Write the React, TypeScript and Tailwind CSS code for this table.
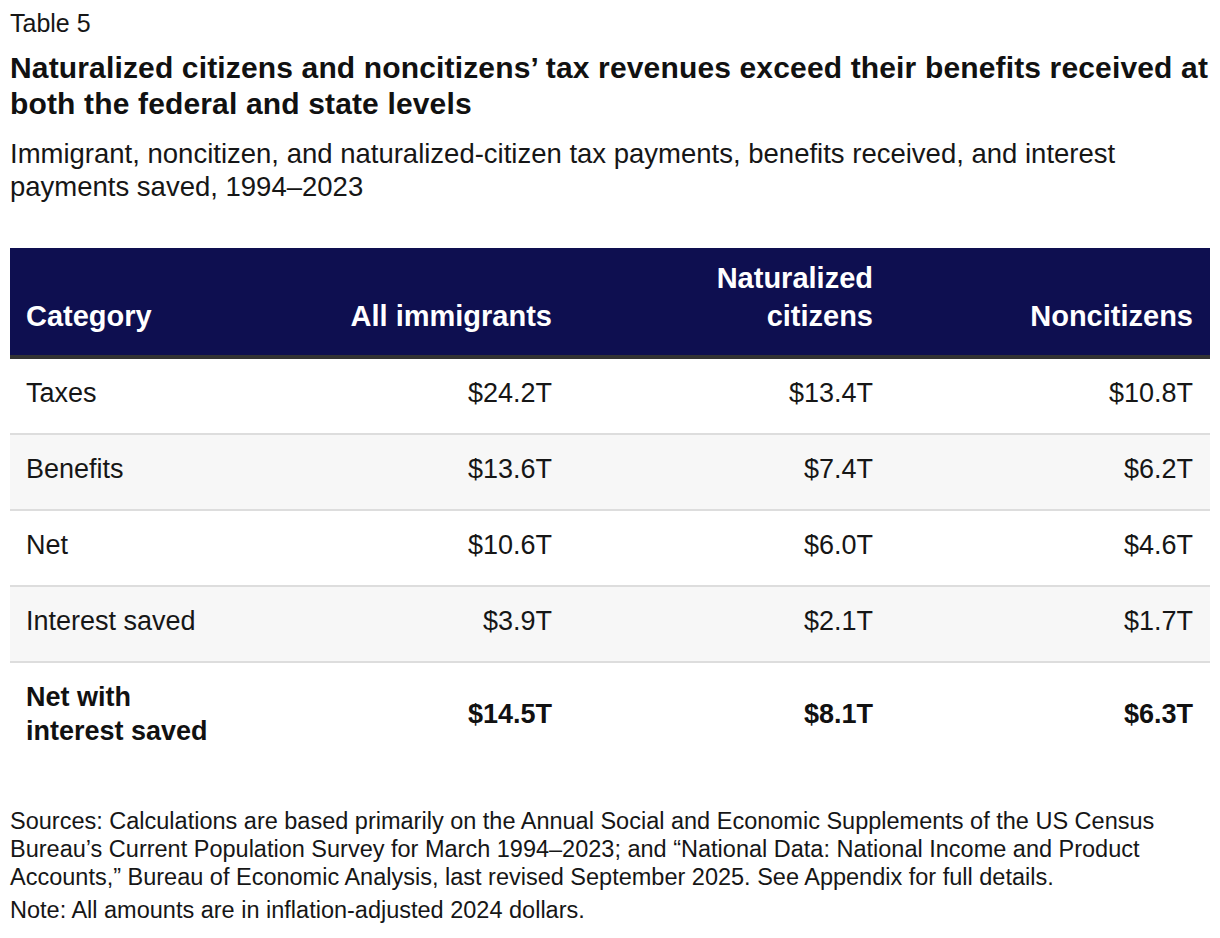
import React from "react";

const rows = [
  { label: "Taxes", a: "$24.2T", b: "$13.4T", c: "$10.8T" },
  { label: "Benefits", a: "$13.6T", b: "$7.4T", c: "$6.2T" },
  { label: "Net", a: "$10.6T", b: "$6.0T", c: "$4.6T" },
  { label: "Interest saved", a: "$3.9T", b: "$2.1T", c: "$1.7T" },
];

export default function App() {
  return (
    <div className="w-[1220px] h-[938px] bg-white px-[10px] text-[#161616] font-['Liberation_Sans',Arial,sans-serif]">
      <p className="pt-[9px] text-[25px] leading-[28px]">Table 5</p>
      <h1 className="mt-[13px] text-[30px] leading-[36px] font-bold tracking-[0.15px] whitespace-nowrap text-[#111]">
        Naturalized citizens and noncitizens’ tax revenues exceed their benefits received at
        <br />
        both the federal and state levels
      </h1>
      <p className="mt-[15px] text-[27.5px] leading-[33px] whitespace-nowrap">
        Immigrant, noncitizen, and naturalized-citizen tax payments, benefits received, and interest
        <br />
        payments saved, 1994–2023
      </p>

      <div className="mt-[45px] w-[1200px]">
        <div className="grid grid-cols-[239px_320px_321px_320px] items-end bg-[#0e0f50] border-b-4 border-[#333333] pt-[11px] pb-[20px] text-white font-bold text-[29px] leading-[38px]">
          <div className="pl-[16px]">Category</div>
          <div className="pr-[17px] text-right">All immigrants</div>
          <div className="pr-[17px] text-right">
            Naturalized
            <br />
            citizens
          </div>
          <div className="pr-[17px] text-right">Noncitizens</div>
        </div>

        {rows.map((r, i) => (
          <div
            key={r.label}
            className={
              "grid grid-cols-[239px_320px_321px_320px] items-center border-b-2 border-[#dddddd] pt-[19px] pb-[25px] text-[27px] leading-[30px] " +
              (i % 2 === 1 ? "bg-[#f7f7f7]" : "bg-white")
            }
          >
            <div className="pl-[16px]">{r.label}</div>
            <div className="pr-[17px] text-right">{r.a}</div>
            <div className="pr-[17px] text-right">{r.b}</div>
            <div className="pr-[17px] text-right">{r.c}</div>
          </div>
        ))}

        <div className="grid grid-cols-[239px_320px_321px_320px] items-center py-[17px] text-[27px] leading-[34px] font-bold text-[#111]">
          <div className="pl-[16px]">
            Net with
            <br />
            interest saved
          </div>
          <div className="pr-[17px] text-right">$14.5T</div>
          <div className="pr-[17px] text-right">$8.1T</div>
          <div className="pr-[17px] text-right">$6.3T</div>
        </div>
      </div>

      <div className="mt-[42px] text-[23.5px] leading-[28px] whitespace-nowrap">
        <p>
          Sources: Calculations are based primarily on the Annual Social and Economic Supplements of the US Census
          <br />
          Bureau’s Current Population Survey for March 1994–2023; and “National Data: National Income and Product
          <br />
          Accounts,” Bureau of Economic Analysis, last revised September 2025. See Appendix for full details.
        </p>
        <p className="mt-[5px]">Note: All amounts are in inflation-adjusted 2024 dollars.</p>
      </div>
    </div>
  );
}
